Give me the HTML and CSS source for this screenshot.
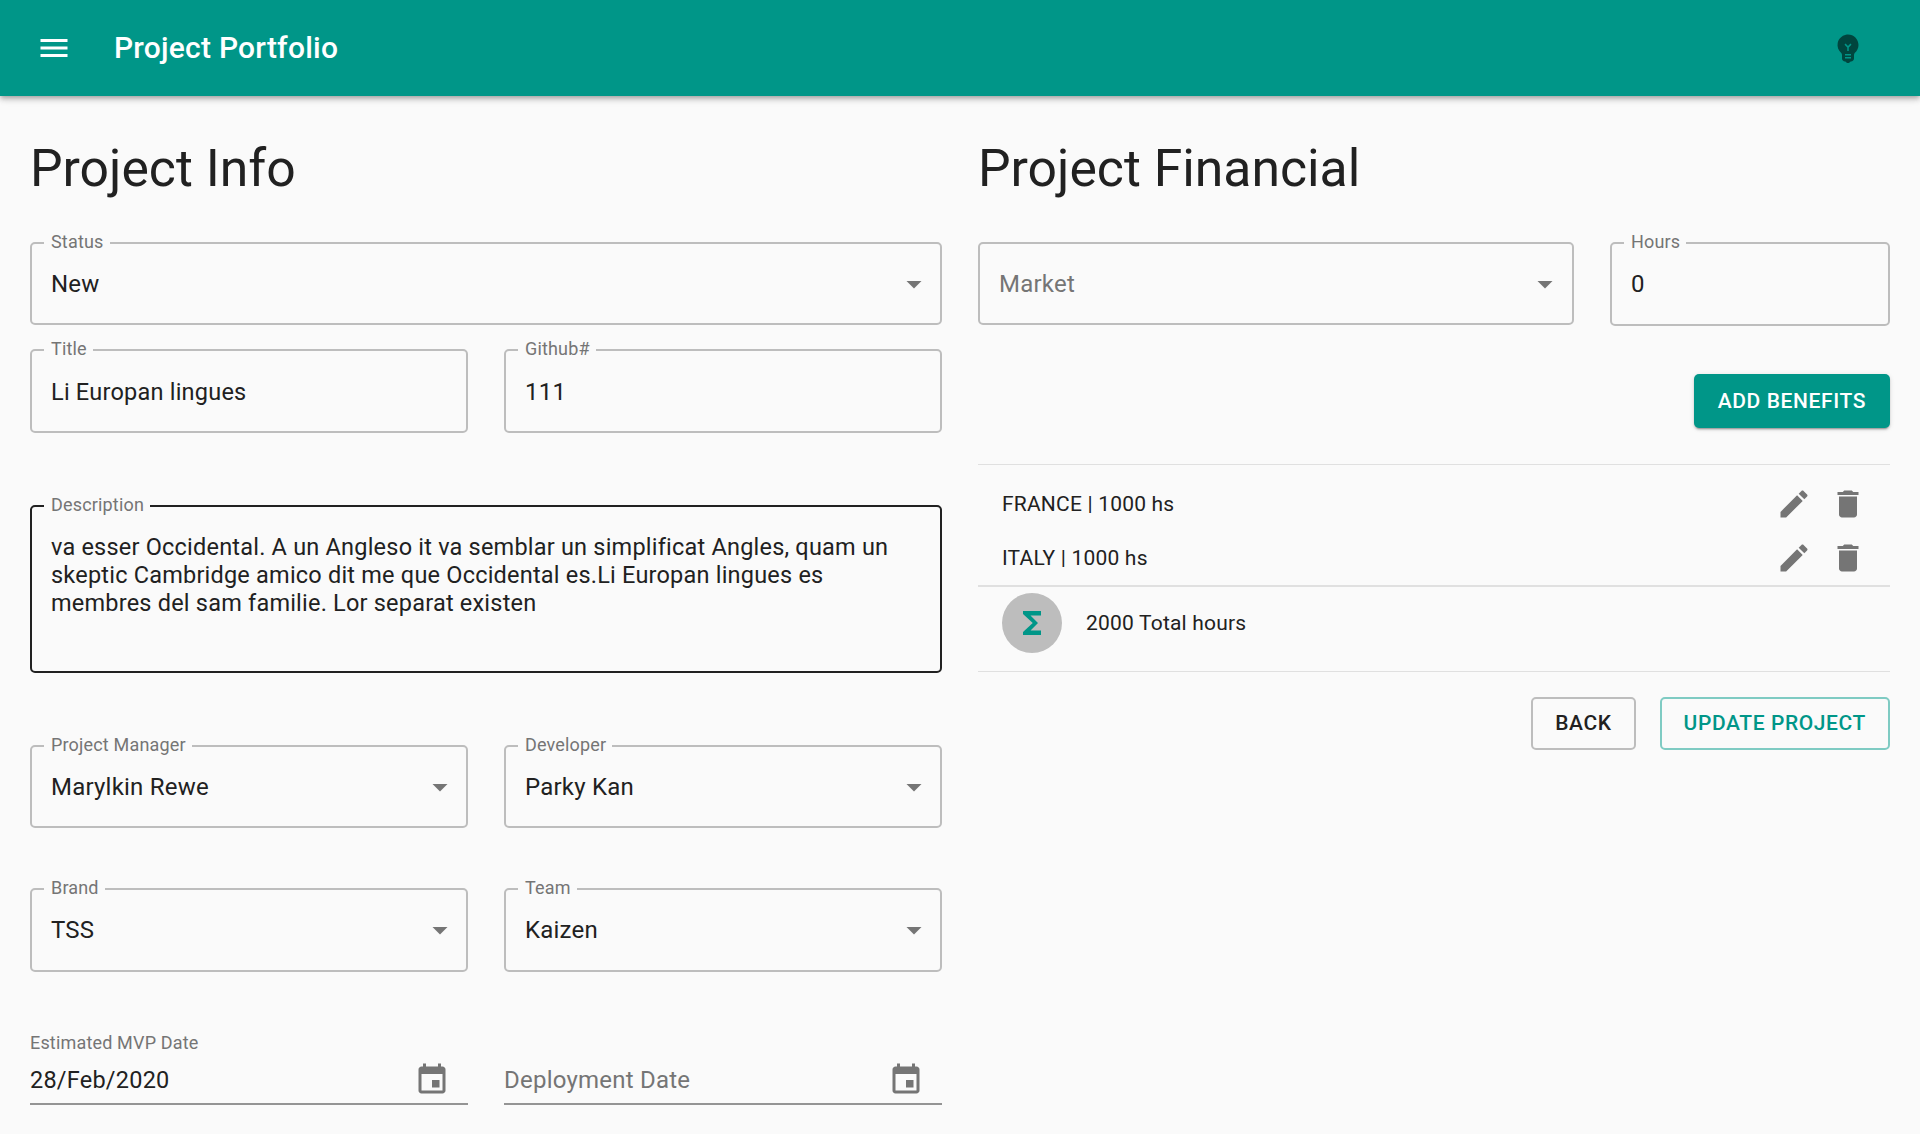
FILE: index.html
```html
<!DOCTYPE html>
<html lang="en">
<head>
<meta charset="utf-8">
<title>Project Portfolio</title>
<link rel="stylesheet" href="styles.css">
</head>
<body>
<header class="appbar">
  <svg class="icon icon-white menu-icon" viewBox="0 0 24 24"><path d="M3 18h18v-2H3v2zm0-5h18v-2H3v2zm0-7v2h18V6H3z"/></svg>
  <h1 class="app-title">Project Portfolio</h1>
  <svg class="icon bulb-icon" viewBox="0 0 24 24"><path fill-rule="evenodd" d="M12 3c-.46 0-.93.04-1.4.14-2.76.53-4.96 2.76-5.48 5.52-.48 2.61.48 5.01 2.22 6.56.43.38.66.91.66 1.47V19c0 1.1.9 2 2 2h.28c.35.6.98 1 1.72 1s1.38-.4 1.72-1H14c1.1 0 2-.9 2-2v-2.31c0-.55.22-1.09.64-1.46C18.09 13.95 19 12.08 19 10c0-3.87-3.13-7-7-7zM14 19h-4v-1h4v1zm0-2h-4v-1h4v1zm-1.5-5.41V14h-1v-2.41L9.67 9.76l.71-.71L12 10.67l1.62-1.62.71.71-1.83 1.83z"/></svg>
</header>
<main class="columns">
  <section class="column">
    <h2 class="page-title">Project Info</h2>
    <fieldset class="field"><legend>Status</legend><span class="value">New</span><svg class="icon caret" viewBox="0 0 24 24"><path d="M7 10l5 5 5-5z"/></svg></fieldset>
    <div class="row row-title">
      <fieldset class="field field-input"><legend>Title</legend><span class="value value-tight">Li Europan lingues</span></fieldset>
      <fieldset class="field field-input"><legend>Github#</legend><span class="value">111</span></fieldset>
    </div>
    <fieldset class="field field-active"><legend>Description</legend><p class="description">va esser Occidental. A un Angleso it va semblar un simplificat Angles, quam un skeptic Cambridge amico dit me que Occidental es.Li Europan lingues es membres del sam familie. Lor separat existen</p></fieldset>
    <div class="row row-people">
      <fieldset class="field"><legend>Project Manager</legend><span class="value">Marylkin Rewe</span><svg class="icon caret" viewBox="0 0 24 24"><path d="M7 10l5 5 5-5z"/></svg></fieldset>
      <fieldset class="field"><legend>Developer</legend><span class="value">Parky Kan</span><svg class="icon caret" viewBox="0 0 24 24"><path d="M7 10l5 5 5-5z"/></svg></fieldset>
    </div>
    <div class="row row-brand">
      <fieldset class="field field-tall"><legend>Brand</legend><span class="value">TSS</span><svg class="icon caret" viewBox="0 0 24 24"><path d="M7 10l5 5 5-5z"/></svg></fieldset>
      <fieldset class="field field-tall"><legend>Team</legend><span class="value">Kaizen</span><svg class="icon caret" viewBox="0 0 24 24"><path d="M7 10l5 5 5-5z"/></svg></fieldset>
    </div>
    <div class="row row-dates">
      <div class="date-field">
        <span class="date-label">Estimated MVP Date</span>
        <div class="date-input"><span class="value value-tight">28/Feb/2020</span><svg class="icon date-icon" viewBox="0 0 24 24"><path d="M17 12h-5v5h5v-5zM16 1v2H8V1H6v2H5c-1.11 0-1.99.9-1.99 2L3 19c0 1.1.89 2 2 2h14c1.1 0 2-.9 2-2V5c0-1.1-.9-2-2-2h-1V1h-2zm3 18H5V8h14v11z"/></svg></div>
      </div>
      <div class="date-field">
        <span class="date-label"></span>
        <div class="date-input"><span class="value placeholder">Deployment Date</span><svg class="icon date-icon" viewBox="0 0 24 24"><path d="M17 12h-5v5h5v-5zM16 1v2H8V1H6v2H5c-1.11 0-1.99.9-1.99 2L3 19c0 1.1.89 2 2 2h14c1.1 0 2-.9 2-2V5c0-1.1-.9-2-2-2h-1V1h-2zm3 18H5V8h14v11z"/></svg></div>
      </div>
    </div>
  </section>
  <section class="column">
    <h2 class="page-title">Project Financial</h2>
    <div class="row row-market">
      <fieldset class="field field-plain"><span class="value placeholder">Market</span><svg class="icon caret" viewBox="0 0 24 24"><path d="M7 10l5 5 5-5z"/></svg></fieldset>
      <fieldset class="field field-hours"><legend>Hours</legend><span class="value">0</span></fieldset>
    </div>
    <div class="actions actions-add"><button class="btn btn-primary" type="button">Add Benefits</button></div>
    <ul class="benefits">
      <li class="benefit"><span class="benefit-text">FRANCE | 1000 hs</span><svg class="icon action-icon" viewBox="0 0 24 24"><path d="M3 17.25V21h3.75L17.81 9.94l-3.75-3.75L3 17.25zM20.71 7.04c.39-.39.39-1.02 0-1.41l-2.34-2.34c-.39-.39-1.02-.39-1.41 0l-1.83 1.83 3.75 3.75 1.83-1.83z"/></svg><svg class="icon action-icon" viewBox="0 0 24 24"><path d="M6 19c0 1.1.9 2 2 2h8c1.1 0 2-.9 2-2V7H6v12zM19 4h-3.5l-1-1h-5l-1 1H5v2h14V4z"/></svg></li>
      <li class="benefit"><span class="benefit-text">ITALY | 1000 hs</span><svg class="icon action-icon" viewBox="0 0 24 24"><path d="M3 17.25V21h3.75L17.81 9.94l-3.75-3.75L3 17.25zM20.71 7.04c.39-.39.39-1.02 0-1.41l-2.34-2.34c-.39-.39-1.02-.39-1.41 0l-1.83 1.83 3.75 3.75 1.83-1.83z"/></svg><svg class="icon action-icon" viewBox="0 0 24 24"><path d="M6 19c0 1.1.9 2 2 2h8c1.1 0 2-.9 2-2V7H6v12zM19 4h-3.5l-1-1h-5l-1 1H5v2h14V4z"/></svg></li>
    </ul>
    <div class="total">
      <span class="avatar"><svg class="icon sigma" viewBox="0 0 24 24"><path d="M18 4H6v2l6.5 6L6 18v2h12v-3h-7l5-5-5-5h7z"/></svg></span>
      <span class="benefit-text">2000 Total hours</span>
    </div>
    <div class="actions actions-end">
      <button class="btn btn-outlined" type="button">Back</button>
      <button class="btn btn-outlined btn-teal" type="button">Update Project</button>
    </div>
  </section>
</main>
</body>
</html>
```
FILE: styles.css
```css
* { box-sizing: border-box; }
html, body { height: 100%; }
body {
  margin: 0;
  background: #fafafa;
  color: #212121;
  font-family: Roboto, "Liberation Sans", sans-serif;
  overflow: hidden;
}
.icon { display: block; width: 36px; height: 36px; fill: #757575; flex: none; }
.appbar {
  height: 96px;
  background: #009688;
  display: flex;
  align-items: center;
  padding: 0 54px 0 36px;
  box-shadow: 0 2px 4px -1px rgba(0,0,0,.2), 0 4px 5px 0 rgba(0,0,0,.14), 0 1px 10px 0 rgba(0,0,0,.12);
  position: relative;
}
.icon-white { fill: #fff; }
.app-title {
  margin: 0 0 2px 42px;
  font-size: 30px;
  font-weight: 500;
  letter-spacing: .225px;
  color: #fff;
  flex: 1;
}
.bulb-icon { fill: rgba(0,0,0,.54); }
.columns {
  display: grid;
  grid-template-columns: 912px 912px;
  column-gap: 36px;
  padding: 0 30px;
}
.page-title {
  margin: 0;
  padding-top: 43px;
  height: 139px;
  font-size: 51.7px;
  line-height: 60px;
  font-weight: 400;
}
.field {
  margin: 0;
  min-width: 0;
  height: 90px;
  border: 2px solid #bdbdbd;
  border-radius: 5px;
  padding: 0 8px 6px 19px;
  display: flex;
  align-items: center;
  justify-content: space-between;
}
.field legend {
  margin-left: -7px;
  padding: 0 6px 2px 7px;
  font-size: 18px;
  line-height: 14px;
  letter-spacing: .17px;
  color: #757575;
}
.field-input { height: 91px; padding-bottom: 5px; }
.field-tall { height: 91px; padding-bottom: 7px; }
.field-hours { height: 91px; padding-bottom: 7px; }
.field-plain { height: 83px; margin-top: 7px; padding: 0 9px 0 19px; }
.field-active { height: 175px; margin-top: 65px; border-color: #212121; align-items: flex-start; padding-top: 19px; padding-right: 30px; }
.value { font-size: 24px; line-height: 28px; letter-spacing: .225px; color: #212121; }
.value-tight { font-size: 23.5px; }
.description { margin: 0; font-size: 23.5px; line-height: 28px; letter-spacing: .21px; color: #212121; }
.placeholder { color: #757575; }
.caret { margin-left: auto; }
.row { display: grid; grid-template-columns: 438px 438px; column-gap: 36px; }
.row-title { margin-top: 17px; }
.row-people { margin-top: 65px; }
.row-brand { margin-top: 53px; }
.row-dates { margin-top: 61px; }
.row-market { grid-template-columns: 596px 280px; }
.date-label { display: block; height: 20px; font-size: 18px; line-height: 20px; letter-spacing: .17px; color: #757575; }
.date-input {
  display: flex;
  align-items: center;
  justify-content: space-between;
  height: 52px;
  padding-right: 18px;
  padding-top: 3px;
  border-bottom: 2px solid #949494;
}
.actions { display: flex; justify-content: flex-end; gap: 24px; }
.actions-add { margin-top: 48px; }
.actions-end { margin-top: 25px; }
.btn {
  height: 54px;
  padding: 0 24px;
  border: 0;
  border-radius: 5px;
  font-family: inherit;
  font-size: 21px;
  font-weight: 500;
  letter-spacing: .6px;
  text-transform: uppercase;
  background: none;
}
.btn-primary {
  background: #009688;
  color: #fff;
  box-shadow: 0 3px 1px -2px rgba(0,0,0,.2), 0 2px 2px 0 rgba(0,0,0,.14), 0 1px 5px 0 rgba(0,0,0,.12);
}
.btn-outlined { height: 53px; padding: 0 22px 2px; border: 2px solid #bdbdbd; color: #212121; }
.btn-teal { border-color: #7fcbc3; color: #009688; }
.benefits {
  list-style: none;
  margin: 36px 0 0;
  padding: 12px 24px 0 24px;
  border-top: 1px solid #e0e0e0;
  border-bottom: 2px solid #e0e0e0;
  height: 123px;
}
.benefit { display: flex; align-items: center; gap: 18px; height: 54px; }
.benefit-text { font-size: 21px; line-height: 28px; letter-spacing: .2px; margin-right: auto; }
.total {
  display: flex;
  align-items: flex-start;
  gap: 24px;
  height: 85px;
  padding: 6px 0 0 24px;
  border-bottom: 1px solid #e0e0e0;
}
.total .benefit-text { margin-top: 16px; }
.avatar {
  width: 60px;
  height: 60px;
  border-radius: 50%;
  background: #bdbdbd;
  display: flex;
  align-items: center;
  justify-content: center;
  flex: none;
}
.sigma { fill: #009688; }
```
